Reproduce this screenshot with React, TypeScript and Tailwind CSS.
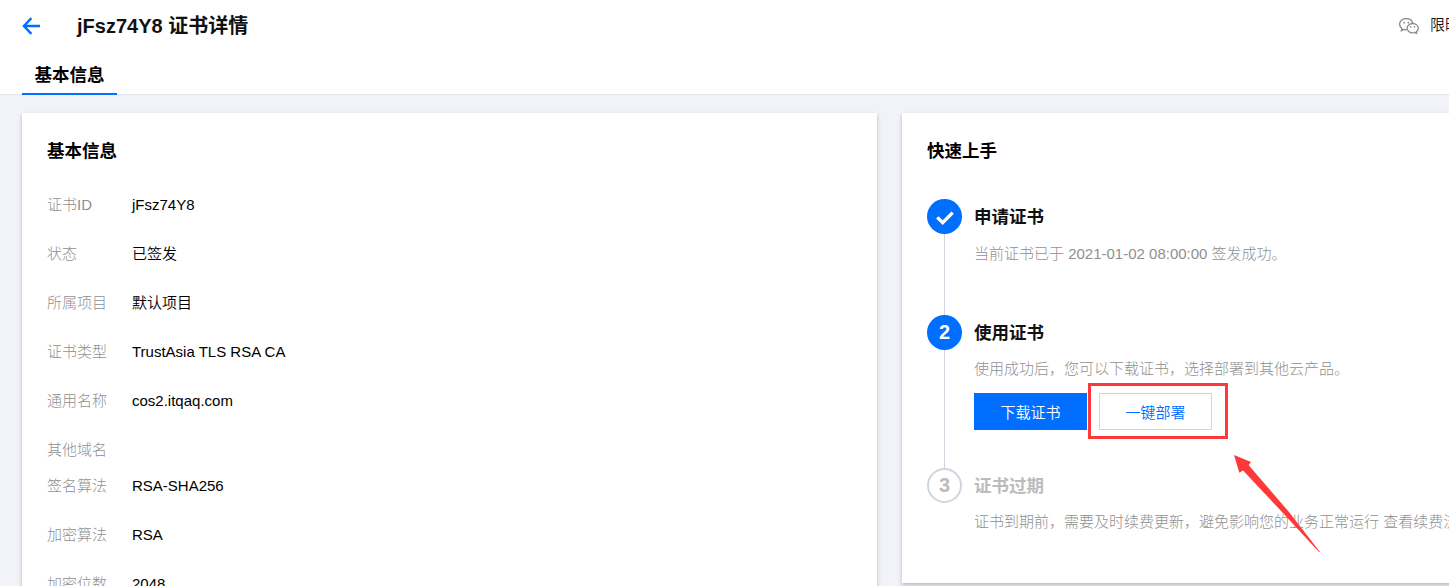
import clsx from "clsx";

interface InfoRow {
  label: string;
  value?: string;
}

const infoRows: InfoRow[] = [
  { label: "证书ID", value: "jFsz74Y8" },
  { label: "状态", value: "已签发" },
  { label: "所属项目", value: "默认项目" },
  { label: "证书类型", value: "TrustAsia TLS RSA CA" },
  { label: "通用名称", value: "cos2.itqaq.com" },
  { label: "其他域名" },
  { label: "签名算法", value: "RSA-SHA256" },
  { label: "加密算法", value: "RSA" },
  { label: "加密位数", value: "2048" },
];

const BackIcon = () => (
  <svg width="18" height="18" viewBox="0 0 18 18" fill="none" stroke="#006eff" strokeWidth="2.4">
    <path d="M9.4 1.2L1.9 9l7.5 7.8M2 9h16" />
  </svg>
);

const WechatIcon = () => (
  <svg width="20" height="16" viewBox="0 0 20 16" fill="none" stroke="#888" strokeWidth="1.3">
    <path d="M7.6 11.7c-.9.1-1.9 0-2.8-.3l-2.4 1.3.5-2.3C1.4 9.3.6 7.8.6 6.2.6 3.1 3.6.6 7.2.6c3.3 0 6 2 6.5 4.7" />
    <path d="M13.7 5.5c3.1 0 5.6 2.1 5.6 4.7 0 1.5-.8 2.8-2 3.6l.4 1.7-2-1c-.6.2-1.3.3-2 .3-3.1 0-5.6-2.1-5.6-4.6s2.5-4.7 5.6-4.7z" />
    <g fill="#888" stroke="none">
      <circle cx="5.1" cy="4.7" r=".9" />
      <circle cx="9.4" cy="4.7" r=".9" />
      <circle cx="11.8" cy="8.9" r=".8" />
      <circle cx="15.5" cy="8.9" r=".8" />
    </g>
  </svg>
);

const CheckIcon = () => (
  <svg className="mt-1" width="18" height="14" viewBox="0 0 18 14" fill="none" stroke="#fff" strokeWidth="3.4">
    <path d="M1.3 6.4l5.4 5.2L16.7 1.6" />
  </svg>
);

interface StepProps {
  marker: React.ReactNode;
  title: string;
  desc: string;
  pending?: boolean;
  last?: boolean;
  className?: string;
  descClassName?: string;
  children?: React.ReactNode;
}

const Step: React.FC<StepProps> = ({
  marker,
  title,
  desc,
  pending,
  last,
  className,
  descClassName = "mt-1.5",
  children,
}) => {
  return (
    <div className={clsx("flex gap-3", className)}>
      <div className="flex w-[35px] shrink-0 flex-col items-center">
        <div
          className={clsx(
            "flex size-[35px] shrink-0 items-center justify-center rounded-full pb-0.5 text-xl font-bold",
            pending ? "border-2 border-[#cfd5de] text-[#bbb]" : "bg-[#006eff] text-white"
          )}
        >
          {marker}
        </div>
        {!last && <div className="w-px flex-1 bg-[#cfd5de]" />}
      </div>
      <div className="whitespace-nowrap">
        <h4
          className={clsx(
            "h-9 pt-px text-[17.5px] leading-[35px] font-bold",
            pending ? "text-[#bbb]" : "text-[#111]"
          )}
        >
          {title}
        </h4>
        <p className={clsx("h-6 text-[15px] leading-6 font-light text-[#909090]", descClassName)}>{desc}</p>
        {children}
      </div>
    </div>
  );
};

const PageHeader = () => (
  <header className="h-[95px] border-b border-[#e1e6ee] bg-white">
    <div className="flex h-[51px] items-center pl-[22px]">
      <BackIcon />
      <h2 className="ml-[37px] text-[20px] font-bold text-[#111]">jFsz74Y8 证书详情</h2>
      <div className="ml-auto flex w-[50px] items-center gap-[11px] overflow-hidden whitespace-nowrap">
        <span className="shrink-0">
          <WechatIcon />
        </span>
        <span className="text-[15px] font-[350] text-[#111]">限时</span>
      </div>
    </div>
    <div className="ml-[22px] flex h-11 w-[95px] justify-center border-b-2 border-[#006eff]">
      <span className="h-12 text-[17.5px] leading-12 font-bold">基本信息</span>
    </div>
  </header>
);

const App: React.FC = () => {
  return (
    <div className="relative flex h-[586px] flex-col overflow-hidden bg-[#f2f3f8] font-['Liberation_Sans','Noto_Sans_CJK_SC',sans-serif] text-black">
      <PageHeader />
      <main className="flex min-h-0 flex-1 items-start gap-[25px] pt-[18px] pl-[22px]">
        <section className="h-[560px] w-[855px] shrink-0 bg-white px-[25px] pt-[25px] shadow-[0_2px_4px_rgba(54,58,80,0.32)]">
          <h3 className="h-[26px] text-[17.5px] leading-[26px] font-bold">基本信息</h3>
          <dl className="mt-[29px] text-[15px] leading-6">
            {infoRows.map((row) => (
              <div key={row.label} className={clsx("flex", row.value ? "h-[49px]" : "h-9")}>
                <dt className="w-[85px] font-light text-[#909090]">{row.label}</dt>
                <dd className="font-[350]">{row.value}</dd>
              </div>
            ))}
          </dl>
        </section>

        <section className="h-[470px] w-[570px] shrink-0 bg-white px-[25px] pt-[25px] shadow-[0_2px_4px_rgba(54,58,80,0.32)]">
          <h3 className="h-[26px] text-[17.5px] leading-[26px] font-bold">快速上手</h3>
          <div className="mt-[35px]">
            <Step
              className="h-[116px]"
              descClassName="mt-[7px]"
              marker={<CheckIcon />}
              title="申请证书"
              desc="当前证书已于 2021-01-02 08:00:00 签发成功。"
            />
            <Step
              className="h-[153px]"
              marker="2"
              title="使用证书"
              desc="使用成功后，您可以下载证书，选择部署到其他云产品。"
            >
              <div className="mt-3 flex gap-3 text-[15px] font-[350]">
                <button className="h-[37px] w-[113px] bg-[#006eff] pt-[3px] text-white">下载证书</button>
                <div className="relative">
                  <button className="h-[37px] w-[113px] border border-[#cfd5de] bg-white pt-[3px] text-[#006eff]">
                    一键部署
                  </button>
                  {/* highlight frame */}
                  <div className="absolute -top-[10px] -left-[11px] h-[56px] w-[140px] border-3 border-[#fd3939]" />
                </div>
              </div>
            </Step>
            <Step
              marker="3"
              title="证书过期"
              desc="证书到期前，需要及时续费更新，避免影响您的业务正常运行 查看续费流程"
              pending
              last
            />
          </div>
        </section>
      </main>

      {/* pointer arrow */}
      <svg className="absolute top-[455px] left-[1234px]" width="87" height="98" viewBox="0 0 87 98">
        <path d="M0 0L17 7L14.7 10.3L55 57L86 97L85 97L48 57L9 15.5L5.3 17.7z" fill="#fd3939" />
      </svg>
    </div>
  );
};

export default App;
